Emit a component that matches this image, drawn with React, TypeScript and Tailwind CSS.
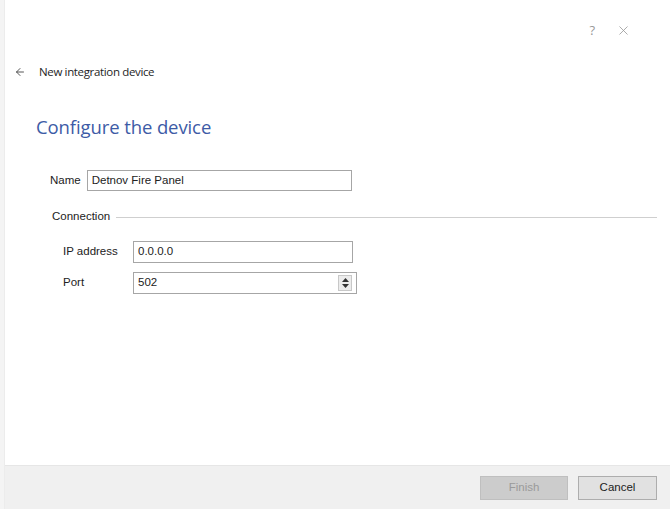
import { ArrowLeft, X } from 'lucide-react';

const label = 'text-[11.5px] text-[#222] font-["Liberation_Sans",Arial,sans-serif]';

function Field({ value, width, spin }: { value: string; width: string; spin?: boolean }) {
  return (
    <div className={`${width} h-[22px] flex items-center border border-[#a6a6a6] bg-white pl-[4px]`}>
      <span className={`${label} flex-1`}>{value}</span>
      {spin && (
        <div className="w-[14px] h-[16px] mr-[4px] flex flex-col items-center justify-center border border-[#c8c8c8] bg-[#ececec] gap-[2px]">
          <svg width="7" height="4" viewBox="0 0 7 4">
            <path d="M0 4 L3.5 0 L7 4 Z" fill="#333" />
          </svg>
          <svg width="7" height="4" viewBox="0 0 7 4">
            <path d="M0 0 L3.5 4 L7 0 Z" fill="#333" />
          </svg>
        </div>
      )}
    </div>
  );
}

export default function App() {
  return (
    <div className="w-[670px] h-[509px] flex bg-white overflow-hidden">
      <div className="w-[5px] bg-[#f4f4f4] border-r border-[#ececec]" />
      <div className="flex-1 flex flex-col">
        {/* title bar */}
        <div className="h-[60px] flex items-center justify-end pr-[39px] gap-[21px] text-[#999]">
          <span className="text-[13px] font-['Open_Sans',sans-serif] leading-none">?</span>
          <X size={15} strokeWidth={1.3} />
        </div>

        <div className="h-[24px] flex items-center pl-[9px] gap-[13px]">
          <ArrowLeft size={12} strokeWidth={1.8} className="text-[#444]" />
          <span className="text-[11.5px] text-[#1e1e1e] font-['Open_Sans',sans-serif] tracking-[-0.35px]">
            New integration device
          </span>
        </div>

        <div className="mt-[31px] pl-[31px] h-[24px] flex items-center">
          <h1 className="text-[18.5px] text-[#3d5ba6] font-['Open_Sans',sans-serif] tracking-[-0.1px]">
            Configure the device
          </h1>
        </div>

        <div className="mt-[31px] pl-[45px] flex items-center gap-[6px] h-[21px]">
          <span className={label}>Name</span>
          <Field value="Detnov Fire Panel" width="w-[265px] !h-[21px]" />
        </div>

        <div className="mt-[18px] pl-[47px] pr-[13px] h-[16px] flex items-center gap-[6px]">
          <span className={label}>Connection</span>
          <div className="flex-1 h-px bg-[#cfcfcf]" />
        </div>

        <div className="mt-[16px] pl-[58px] flex flex-col gap-[9px]">
          <div className="flex items-center">
            <span className={`${label} w-[70px]`}>IP address</span>
            <Field value="0.0.0.0" width="w-[220px]" />
          </div>
          <div className="flex items-center">
            <span className={`${label} w-[70px]`}>Port</span>
            <Field value="502" width="w-[224px]" spin />
          </div>
        </div>

        <div className="flex-1" />

        {/* footer */}
        <div className="h-[44px] bg-[#f0f0f0] border-t border-[#e6e6e6] flex items-center justify-end pr-[13px] gap-[10px]">
          <button className="w-[88px] h-[24px] bg-[#cccccc] border border-[#bfbfbf] text-[11.5px] text-[#9a9a9a] font-['Liberation_Sans',Arial,sans-serif]">
            Finish
          </button>
          <button className="w-[79px] h-[24px] bg-[#e1e1e1] border border-[#adadad] text-[11.5px] text-[#222] font-['Liberation_Sans',Arial,sans-serif]">
            Cancel
          </button>
        </div>
      </div>
    </div>
  );
}
